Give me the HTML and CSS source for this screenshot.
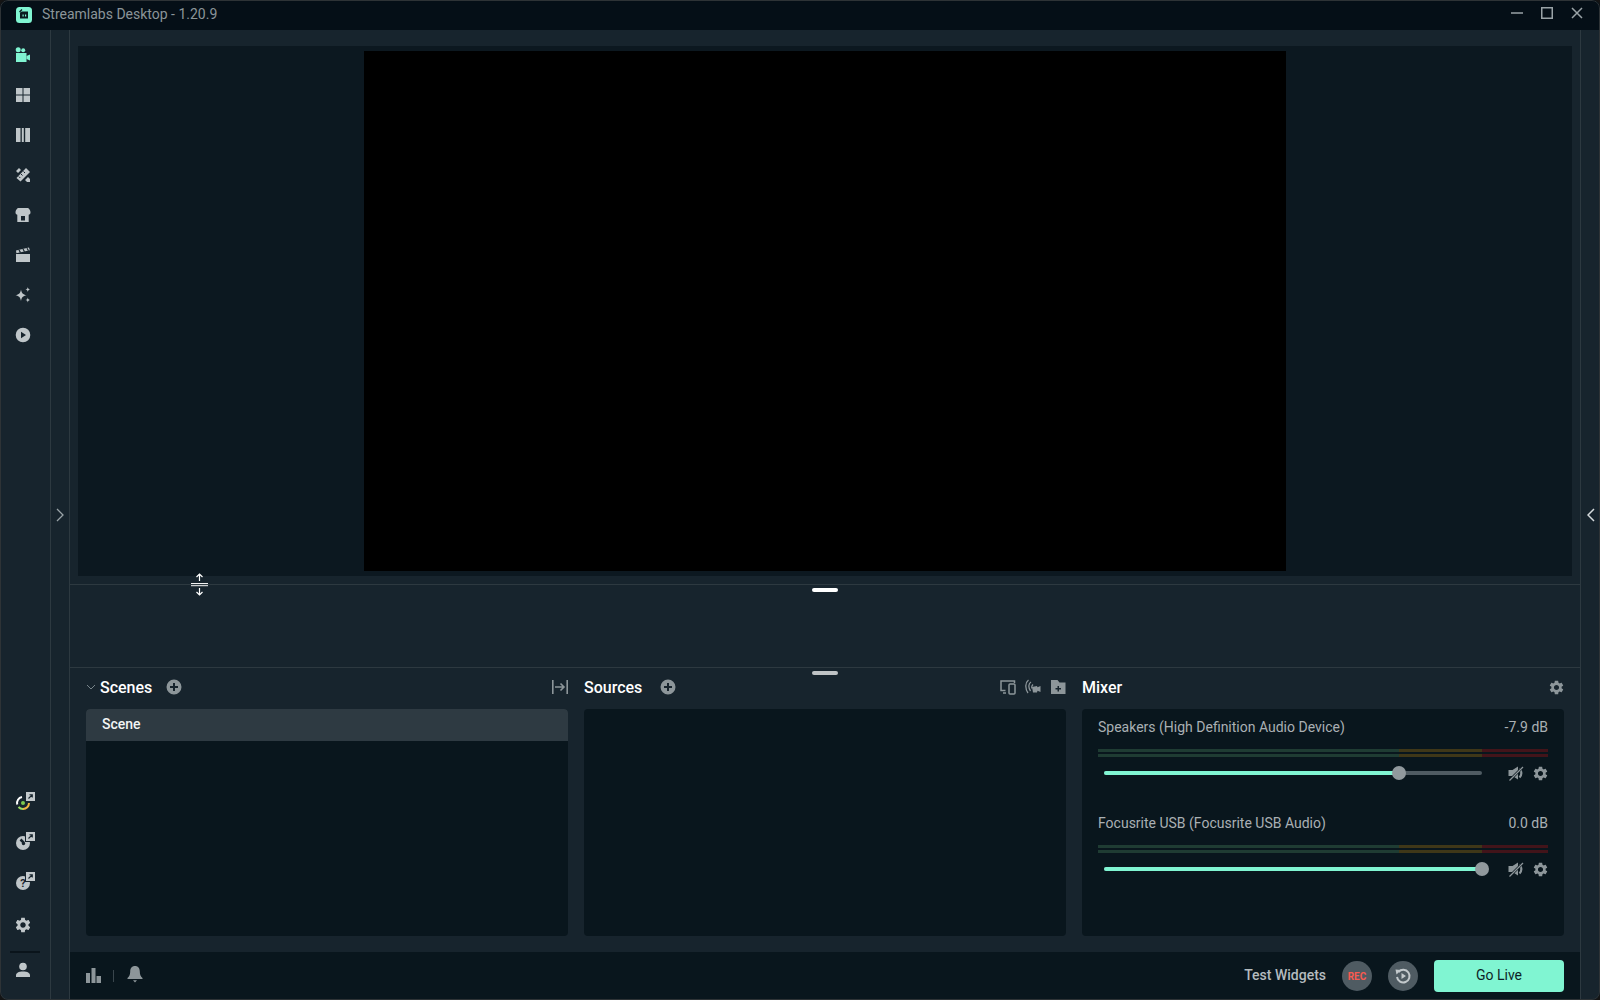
FILE: index.html
```html
<!DOCTYPE html>
<html lang="en">
<head>
<meta charset="UTF-8">
<title>Streamlabs Desktop</title>
<link rel="stylesheet" href="styles.css">
</head>
<body>
  <svg class="defs" width="0" height="0">
    <symbol id="gear" viewBox="1.500 1.500 21 21"><path d="M19.14 12.94c.04-.3.06-.61.06-.94 0-.32-.02-.64-.07-.94l2.03-1.58c.18-.14.23-.41.12-.61l-1.92-3.32c-.12-.22-.37-.29-.59-.22l-2.39.96c-.5-.38-1.03-.7-1.62-.94l-.36-2.54c-.04-.24-.24-.41-.48-.41h-3.84c-.24 0-.43.17-.47.41l-.36 2.54c-.59.24-1.13.57-1.62.94l-2.39-.96c-.22-.08-.47 0-.59.22L2.74 8.87c-.12.21-.08.47.12.61l2.03 1.58c-.05.3-.09.63-.09.94s.02.64.07.94l-2.03 1.58c-.18.14-.23.41-.12.61l1.92 3.32c.12.22.37.29.59.22l2.39-.96c.5.38 1.03.7 1.62.94l.36 2.54c.05.24.24.41.48.41h3.84c.24 0 .44-.17.47-.41l.36-2.54c.59-.24 1.13-.56 1.62-.94l2.39.96c.22.08.47 0 .59-.22l1.92-3.32c.12-.22.07-.47-.12-.61l-2.01-1.58zM12 15.6c-1.98 0-3.6-1.62-3.6-3.6s1.62-3.6 3.6-3.6 3.6 1.62 3.6 3.6-1.62 3.6-3.6 3.6z"/></symbol>
    <symbol id="plus" viewBox="0 0 16 16"><path fill-rule="evenodd" d="M8 .5a7.500 7.500 0 1 0 0 15 7.500 7.500 0 0 0 0-15zM7 4h2v3h3v2H9v3H7V9H4V7h3z"/></symbol>
    <symbol id="mute" viewBox="0 0 16 16"><path d="M.5 5h4L10 1.500V14.500L4.500 11H.5z"/><path d="M11.500 3.500c2.500 2.500 2.500 6.500 0 9" fill="none" stroke="currentColor" stroke-width="2.200"/><path d="M1 16 15.500 1.500" stroke="#09161d" stroke-width="2.600"/><path d="M1.500 15.500 15 2" stroke="currentColor" stroke-width="1.300"/></symbol>
  </svg>

  <div class="app">
    <div class="titlebar">
      <svg class="logo" viewBox="0 0 16 16"><rect width="16" height="16" rx="3.500" fill="#80f5d2"/><path d="M4 6.500c0-1.200.8-2 2-2h6v7H4z" fill="#0a1a20"/><path d="M3.500 5 6 2.500" stroke="#0a1a20" stroke-width="1.200"/><rect x="6.500" y="7.500" width="1.200" height="2" fill="#80f5d2"/><rect x="9" y="7.500" width="1.200" height="2" fill="#80f5d2"/></svg>
      <span class="title">Streamlabs Desktop - 1.20.9</span>
      <div class="win-controls">
        <svg width="12" height="12" viewBox="0 0 12 12"><path d="M0 6h12" stroke="currentColor" stroke-width="1.500"/></svg>
        <svg width="12" height="12" viewBox="0 0 12 12"><rect x=".75" y=".75" width="10.500" height="10.500" fill="none" stroke="currentColor" stroke-width="1.500"/></svg>
        <svg width="12" height="12" viewBox="0 0 12 12"><path d="M1 1l10 10M11 1 1 11" stroke="currentColor" stroke-width="1.500"/></svg>
      </div>
    </div>

    <div class="shell">
      <nav class="nav">
        <div class="nav-group nav-top">
          <a class="nav-item active"><svg viewBox="0 0 16 16"><circle cx="3.200" cy="2.800" r="2.500"/><circle cx="8.200" cy="3.300" r="2"/><rect x="1" y="6" width="10.500" height="9"/><path d="M11.500 9 15 7.500v6L11.500 12z"/></svg></a>
          <a class="nav-item"><svg viewBox="0 0 16 16"><rect x="1" y="1" width="6.500" height="6.500"/><rect x="8.500" y="1" width="6.500" height="6.500"/><rect x="1" y="8.500" width="6.500" height="6.500"/><rect x="8.500" y="8.500" width="6.500" height="6.500"/></svg></a>
          <a class="nav-item"><svg viewBox="0 0 16 16"><rect x="1" y="1" width="4.500" height="14"/><rect x="6.800" y="1" width="2" height="14"/><rect x="10.200" y="1" width="4.800" height="14"/></svg></a>
          <a class="nav-item"><svg viewBox="0 0 16 16"><path d="M11 1 15 5 5.500 14.500 1.500 11z"/><path d="M8.500 4.500 10 6M6 7l1.500 1.500M3.800 9.500l1.500 1.500" stroke="#17242d" stroke-width="1"/><path d="M1 4 4 1 6 3 3 6zM13 10l2 2v3h-3l-2-2z"/></svg></a>
          <a class="nav-item"><svg viewBox="0 0 16 16"><path fill-rule="evenodd" d="M3 1h10c1.500 1 2.500 2.500 2.500 4.500 0 1.300-.9 2.200-1.800 2.300V15H2.300V7.800C1.400 7.700.5 6.800.5 5.500.5 3.500 1.500 2 3 1zM6 9v4.500h4V9z"/></svg></a>
          <a class="nav-item"><svg viewBox="0 0 16 16"><path d="M1 7h14v8H1z"/><path d="M1 3.500 14 .5l.8 2.700L1.400 6.300z"/><path d="M4 3 5.500 5.600M8 2 9.500 4.700M12 1.200 13.500 3.800" stroke="#17242d" stroke-width="1.200"/></svg></a>
          <a class="nav-item"><svg viewBox="0 0 16 16"><path d="M6 2.500c.6 3.600 1.900 5 5.500 5.800-3.600.8-4.900 2.200-5.500 5.800-.6-3.600-1.900-5-5.500-5.800C4.100 7.500 5.400 6.100 6 2.500zM12.800 0c.2 1.500.9 2.200 2.400 2.500-1.500.3-2.200 1-2.400 2.500-.2-1.500-.9-2.200-2.400-2.500 1.500-.3 2.200-1 2.400-2.500zM12.800 10.500c.2 1.500.9 2.200 2.400 2.500-1.500.3-2.200 1-2.400 2.500-.2-1.500-.9-2.200-2.400-2.500 1.500-.3 2.200-1 2.400-2.500z"/></svg></a>
          <a class="nav-item"><svg viewBox="0 0 16 16"><path fill-rule="evenodd" d="M8 .7a7.300 7.300 0 1 0 0 14.600A7.300 7.300 0 0 0 8 .7zM6 4.800l5 3.200-5 3.200z"/></svg></a>
        </div>
        <div class="nav-group nav-bottom">
          <a class="nav-item"><svg class="ext" viewBox="0 0 21 24"><path d="M2.200 13.500A6 6 0 0 1 7 6.100" fill="none" stroke="#fff" stroke-width="2"/><path d="M3.500 16A6 6 0 0 0 8 18" fill="none" stroke="#9bdc62" stroke-width="2"/><path d="M8 18A6 6 0 0 0 14 12" fill="none" stroke="#f2b544" stroke-width="2"/><circle cx="8" cy="12" r="2" fill="#7cc84f"/><rect x="10" y="0" width="11" height="11" fill="#17242d"/><rect x="11" y="1" width="9" height="9" fill="#c3c9cc"/><path d="M13.500 7.500 17 4M14.500 3.800H17.300V6.600" fill="none" stroke="#17242d" stroke-width="1.100"/></svg></a>
          <a class="nav-item"><svg class="ext" viewBox="0 0 21 24"><circle cx="8" cy="12" r="7"/><path d="M9 12 5.500 8.500" stroke="#17242d" stroke-width="2.500"/><circle cx="8.500" cy="12.500" r="1.700" fill="#17242d"/><rect x="10" y="0" width="11" height="11" fill="#17242d"/><rect x="11" y="1" width="9" height="9" fill="#c3c9cc"/><path d="M13.500 7.500 17 4M14.500 3.800H17.300V6.600" fill="none" stroke="#17242d" stroke-width="1.100"/></svg></a>
          <a class="nav-item"><svg class="ext" viewBox="0 0 21 24"><circle cx="8" cy="12" r="7"/><text x="8" y="16" class="help-mark">?</text><rect x="10" y="0" width="11" height="11" fill="#17242d"/><rect x="11" y="1" width="9" height="9" fill="#c3c9cc"/><path d="M13.500 7.500 17 4M14.500 3.800H17.300V6.600" fill="none" stroke="#17242d" stroke-width="1.100"/></svg></a>
          <a class="nav-item nav-gear"><svg><use href="#gear"/></svg></a>
          <div class="nav-sep"></div>
          <a class="nav-item nav-user"><svg viewBox="0 0 16 16"><circle cx="8" cy="4.500" r="3.800"/><path d="M1 15v-1.500C1 11 3.500 9.500 8 9.500s7 1.500 7 4V15z"/></svg></a>
        </div>
      </nav>

      <div class="strip strip-left">
        <svg width="8" height="14" viewBox="0 0 8 14"><path d="M1 1l6 6-6 6" fill="none" stroke="currentColor" stroke-width="1.300"/></svg>
      </div>

      <main class="main">
        <div class="editor">
          <div class="display"><div class="canvas"></div></div>
        </div>
        <div class="resize-bar"><span class="handle"></span></div>
        <div class="spacer"></div>
        <div class="resize-bar"><span class="handle handle-dim"></span></div>

        <div class="panels">
          <section class="panel">
            <header class="panel-head">
              <svg class="caret" width="10" height="6" viewBox="0 0 10 6"><path d="M1 1l4 4 4-4" fill="none" stroke="currentColor"/></svg>
              <h2>Scenes</h2>
              <svg class="ic ic-add scenes-add"><use href="#plus"/></svg>
              <div class="head-right">
                <svg class="ic" width="16" height="16" viewBox="0 0 16 16"><path d="M.8 1v14M15.200 1v14M3 8h9M8.500 4.500 12 8l-3.500 3.500" fill="none" stroke="currentColor" stroke-width="1.600"/></svg>
              </div>
            </header>
            <div class="panel-box">
              <div class="scene-row">Scene</div>
            </div>
          </section>

          <section class="panel">
            <header class="panel-head">
              <h2>Sources</h2>
              <svg class="ic ic-add"><use href="#plus"/></svg>
              <div class="head-right gap-9">
                <svg class="ic" width="16" height="16" viewBox="0 0 16 16"><path d="M5.500 11.500H1V2h13.500v2" fill="none" stroke="currentColor" stroke-width="1.500"/><path d="M3 14h3" stroke="currentColor" stroke-width="1.500"/><rect x="9" y="5" width="6" height="10" rx="1" fill="none" stroke="currentColor" stroke-width="1.500"/></svg>
                <svg class="ic" width="16" height="16" viewBox="0 0 16 16"><path d="M7 8l5-1 .5 1.200L15.500 7v6l-3-1.200-.5 1.700H8z"/><path d="M6 3C3.500 4.500 3 8.500 5.500 12M3.500 1C.2 3.500-.2 9.500 3 14M8 5.500C6.800 6.500 6.500 8 7 9.500" fill="none" stroke="currentColor" stroke-width="1.300"/></svg>
                <svg class="ic" width="16" height="16" viewBox="0 0 16 16"><path fill-rule="evenodd" d="M1 1h6.500l2 2.500H15.500V15H1zM7.500 7v2h-2v1.500h2v2H9v-2h2V9H9V7z"/></svg>
              </div>
            </header>
            <div class="panel-box"></div>
          </section>

          <section class="panel">
            <header class="panel-head">
              <h2>Mixer</h2>
              <div class="head-right">
                <svg class="ic" width="15" height="15"><use href="#gear"/></svg>
              </div>
            </header>
            <div class="panel-box mixer">
              <div class="mixer-item">
                <div class="mixer-row"><span>Speakers (High Definition Audio Device)</span><span>-7.9 dB</span></div>
                <div class="meter"><i></i><i></i></div>
                <div class="fader">
                  <div class="track"><div class="fill" style="width: 78%"></div><span class="thumb" style="left: 78%"></span></div>
                  <svg class="ic" width="16" height="16"><use href="#mute"/></svg>
                  <svg class="ic" width="15" height="15"><use href="#gear"/></svg>
                </div>
              </div>
              <div class="mixer-item">
                <div class="mixer-row"><span>Focusrite USB (Focusrite USB Audio)</span><span>0.0 dB</span></div>
                <div class="meter"><i></i><i></i></div>
                <div class="fader">
                  <div class="track"><div class="fill" style="width: 100%"></div><span class="thumb" style="left: 100%"></span></div>
                  <svg class="ic" width="16" height="16"><use href="#mute"/></svg>
                  <svg class="ic" width="15" height="15"><use href="#gear"/></svg>
                </div>
              </div>
            </div>
          </section>
        </div>

        <footer class="footer">
          <svg class="ic chart" width="15" height="15" viewBox="0 0 15 15"><rect x="0" y="5" width="4" height="10"/><rect x="5.500" y="0" width="4" height="15"/><rect x="10.500" y="8" width="4.500" height="7"/></svg>
          <span class="foot-sep"></span>
          <svg class="ic bell" width="16" height="17" viewBox="0 0 16 17"><path d="M8 0c3 0 4.800 2.200 4.800 5.500 0 3 .8 5 2.700 6.500v1H.5v-1c1.900-1.500 2.700-3.500 2.700-6.500C3.200 2.200 5 0 8 0zM6 14.200h4L8 16.500z"/></svg>
          <div class="foot-right">
            <span class="test-widgets">Test Widgets</span>
            <span class="round-btn rec">REC</span>
            <span class="round-btn"><svg width="18" height="18" viewBox="0 0 18 18"><path d="M4.500 5A6.300 6.300 0 1 1 3 10" fill="none" stroke="#c3c9cc" stroke-width="2"/><path d="M1.500 2.500 7 3 2.500 7.500zM7.500 6v6l4.500-3z" fill="#c3c9cc"/></svg></span>
            <button class="go-live">Go Live</button>
          </div>
        </footer>
      </main>

      <div class="strip strip-right">
        <svg width="8" height="14" viewBox="0 0 8 14"><path d="M7 1 1 7l6 6" fill="none" stroke="currentColor" stroke-width="1.500"/></svg>
      </div>
    </div>

    <svg class="cursor" width="17" height="23" viewBox="0 0 17 23">
      <path d="M8.500 1v7M5.500 4 8.500 1l3 3M8.500 15v7M5.500 19 8.500 22l3-3" fill="none" stroke="#fff" stroke-width="1.200"/>
      <path d="M0 10.500h17M0 12.700h17" stroke="#f2f2f2" stroke-width="1"/>
    </svg>
    <div class="frame"></div>
  </div>
</body>
</html>
```

FILE: styles.css
```css
* {
  margin: 0;
  padding: 0;
  box-sizing: border-box;
}

body {
  width: 1600px;
  height: 1000px;
  background-color: #141414;
  font-family: Roboto, "Liberation Sans", sans-serif;
  overflow: hidden;
}

.defs {
  position: absolute;
}

.app {
  position: relative;
  width: 100%;
  height: 100%;
  display: flex;
  flex-direction: column;
  background-color: #17242d;
  border-radius: 8px;
  overflow: hidden;
}

.frame {
  position: absolute;
  inset: 0;
  border: 1px solid #2e3336;
  border-radius: 8px;
  pointer-events: none;
}

.titlebar {
  height: 30px;
  flex: none;
  display: flex;
  align-items: center;
  padding-left: 16px;
  background-color: #050f17;
}

.logo {
  width: 16px;
  height: 16px;
}

.title {
  margin-left: 10px;
  margin-top: -2px;
  font-size: 14px;
  color: #8b9599;
}

.win-controls {
  margin-left: auto;
  margin-right: 17px;
  margin-top: -4px;
  display: flex;
  gap: 18px;
  color: #9aa3a7;
}

.shell {
  flex: 1;
  display: flex;
  min-height: 0;
}

.nav {
  width: 51px;
  flex: none;
  border-right: 1px solid #2d3940;
  display: flex;
  flex-direction: column;
  justify-content: space-between;
  padding: 5px 0 14px;
}

.nav-item {
  height: 40px;
  display: flex;
  align-items: center;
  padding-left: 15px;
  fill: #bfc6c9;
}

.nav-item svg {
  width: 16px;
  height: 16px;
}

.nav-item svg.ext {
  width: 21px;
  height: 24px;
}

.nav-item.active {
  fill: #80f5d2;
}

.help-mark {
  font-size: 11px;
  font-weight: 700;
  text-anchor: middle;
  fill: #17242d;
}

.nav-gear {
  margin-top: 2px;
}

.nav-sep {
  height: 2px;
  margin: 6px 10px 1px;
  background-color: #0a141b;
}

.nav-user {
  height: 32px;
}

.strip {
  flex: none;
  display: flex;
  align-items: center;
  justify-content: center;
  color: #9aa3a7;
}

.strip-left {
  width: 19px;
  border-right: 1px solid #2d3940;
}

.strip-right {
  width: 20px;
  border-left: 1px solid #2d3940;
  color: #d5dadc;
}

.main {
  flex: 1;
  min-width: 0;
  display: flex;
  flex-direction: column;
}

.editor {
  height: 554px;
  flex: none;
  padding: 16px 8px 8px;
}

.display {
  height: 100%;
  background-color: #0c1820;
  display: flex;
  justify-content: center;
  padding: 5px 0;
}

.canvas {
  width: 922px;
  background-color: #000;
}

.resize-bar {
  flex: none;
  height: 8px;
  border-top: 1px solid #2d3940;
  display: flex;
  justify-content: center;
  padding-top: 3px;
}

.handle {
  width: 26px;
  height: 4px;
  border-radius: 2px;
  background-color: #fff;
}

.handle-dim {
  background-color: #bfc3c5;
}

.spacer {
  height: 75px;
  flex: none;
}

.panels {
  flex: 1;
  min-height: 0;
  display: flex;
  gap: 16px;
  padding: 0 16px 16px;
}

.panel {
  flex: 1;
  min-width: 0;
  display: flex;
  flex-direction: column;
}

.panel-head {
  height: 24px;
  margin-bottom: 10px;
  flex: none;
  display: flex;
  align-items: center;
}

.panel-head h2 {
  font-size: 16px;
  font-weight: 500;
  color: #fff;
}

.caret {
  margin-right: 4px;
  color: #77848a;
  flex: none;
}

.ic {
  fill: #8d969a;
  color: #8d969a;
  flex: none;
}

.ic-add {
  width: 16px;
  height: 16px;
  margin-left: 18px;
}

.scenes-add {
  margin-left: 14px;
}

.head-right {
  margin-left: auto;
  display: flex;
  align-items: center;
}

.gap-9 {
  gap: 9px;
}

.panel-box {
  flex: 1;
  background-color: #09161d;
  border-radius: 4px;
  overflow: hidden;
}

.scene-row {
  height: 32px;
  padding: 0 0 2px 16px;
  display: flex;
  align-items: center;
  font-size: 14px;
  font-weight: 500;
  color: #f2f4f4;
  background-color: #2e3a42;
}

.mixer {
  padding: 8px 16px 0;
}

.mixer-item {
  margin-bottom: 28px;
}

.mixer-row {
  height: 20px;
  display: flex;
  justify-content: space-between;
  align-items: center;
  font-size: 14px;
  color: #a9b0b4;
}

.meter {
  margin-top: 12px;
  display: flex;
  flex-direction: column;
  gap: 2px;
}

.meter i {
  display: block;
  height: 3px;
  background: linear-gradient(to right, #1f3c33 0, #1f3c33 66.8%, #3f3718 66.8%, #3f3718 85.3%, #42141a 85.3%, #42141a 100%);
}

.fader {
  margin-top: 4px;
  height: 24px;
  padding-left: 6px;
  display: flex;
  align-items: center;
  gap: 9px;
}

.track {
  position: relative;
  width: 379px;
  height: 4px;
  margin-right: 17px;
  border-radius: 2px;
  background-color: #4f5b62;
}

.fill {
  height: 100%;
  border-radius: 2px;
  background-color: #80f5d2;
}

.thumb {
  position: absolute;
  top: -5px;
  width: 14px;
  height: 14px;
  margin-left: -7px;
  border-radius: 50%;
  background-color: #91999d;
}

.footer {
  height: 48px;
  flex: none;
  display: flex;
  align-items: center;
  padding: 0 16px;
  background-color: #09161d;
}

.chart {
  margin-top: -1px;
}

.foot-sep {
  width: 1px;
  height: 12px;
  margin: 0 13px 0 12px;
  background-color: #3a464d;
}

.bell {
  margin-top: -4px;
}

.foot-right {
  margin-left: auto;
  display: flex;
  align-items: center;
  gap: 16px;
}

.test-widgets {
  margin-top: -2px;
  font-size: 14px;
  font-weight: 500;
  color: #b4bbbf;
}

.round-btn {
  width: 30px;
  height: 30px;
  border-radius: 50%;
  display: flex;
  align-items: center;
  justify-content: center;
  background-color: #4f5b62;
}

.rec {
  font-size: 10px;
  font-weight: 700;
  color: #f85a50;
}

.go-live {
  width: 130px;
  height: 32px;
  padding-bottom: 2px;
  border: none;
  border-radius: 4px;
  font-family: inherit;
  font-size: 14px;
  font-weight: 400;
  color: #0d1f26;
  background-color: #80f5d2;
}

.cursor {
  position: absolute;
  left: 191px;
  top: 573px;
}
```
